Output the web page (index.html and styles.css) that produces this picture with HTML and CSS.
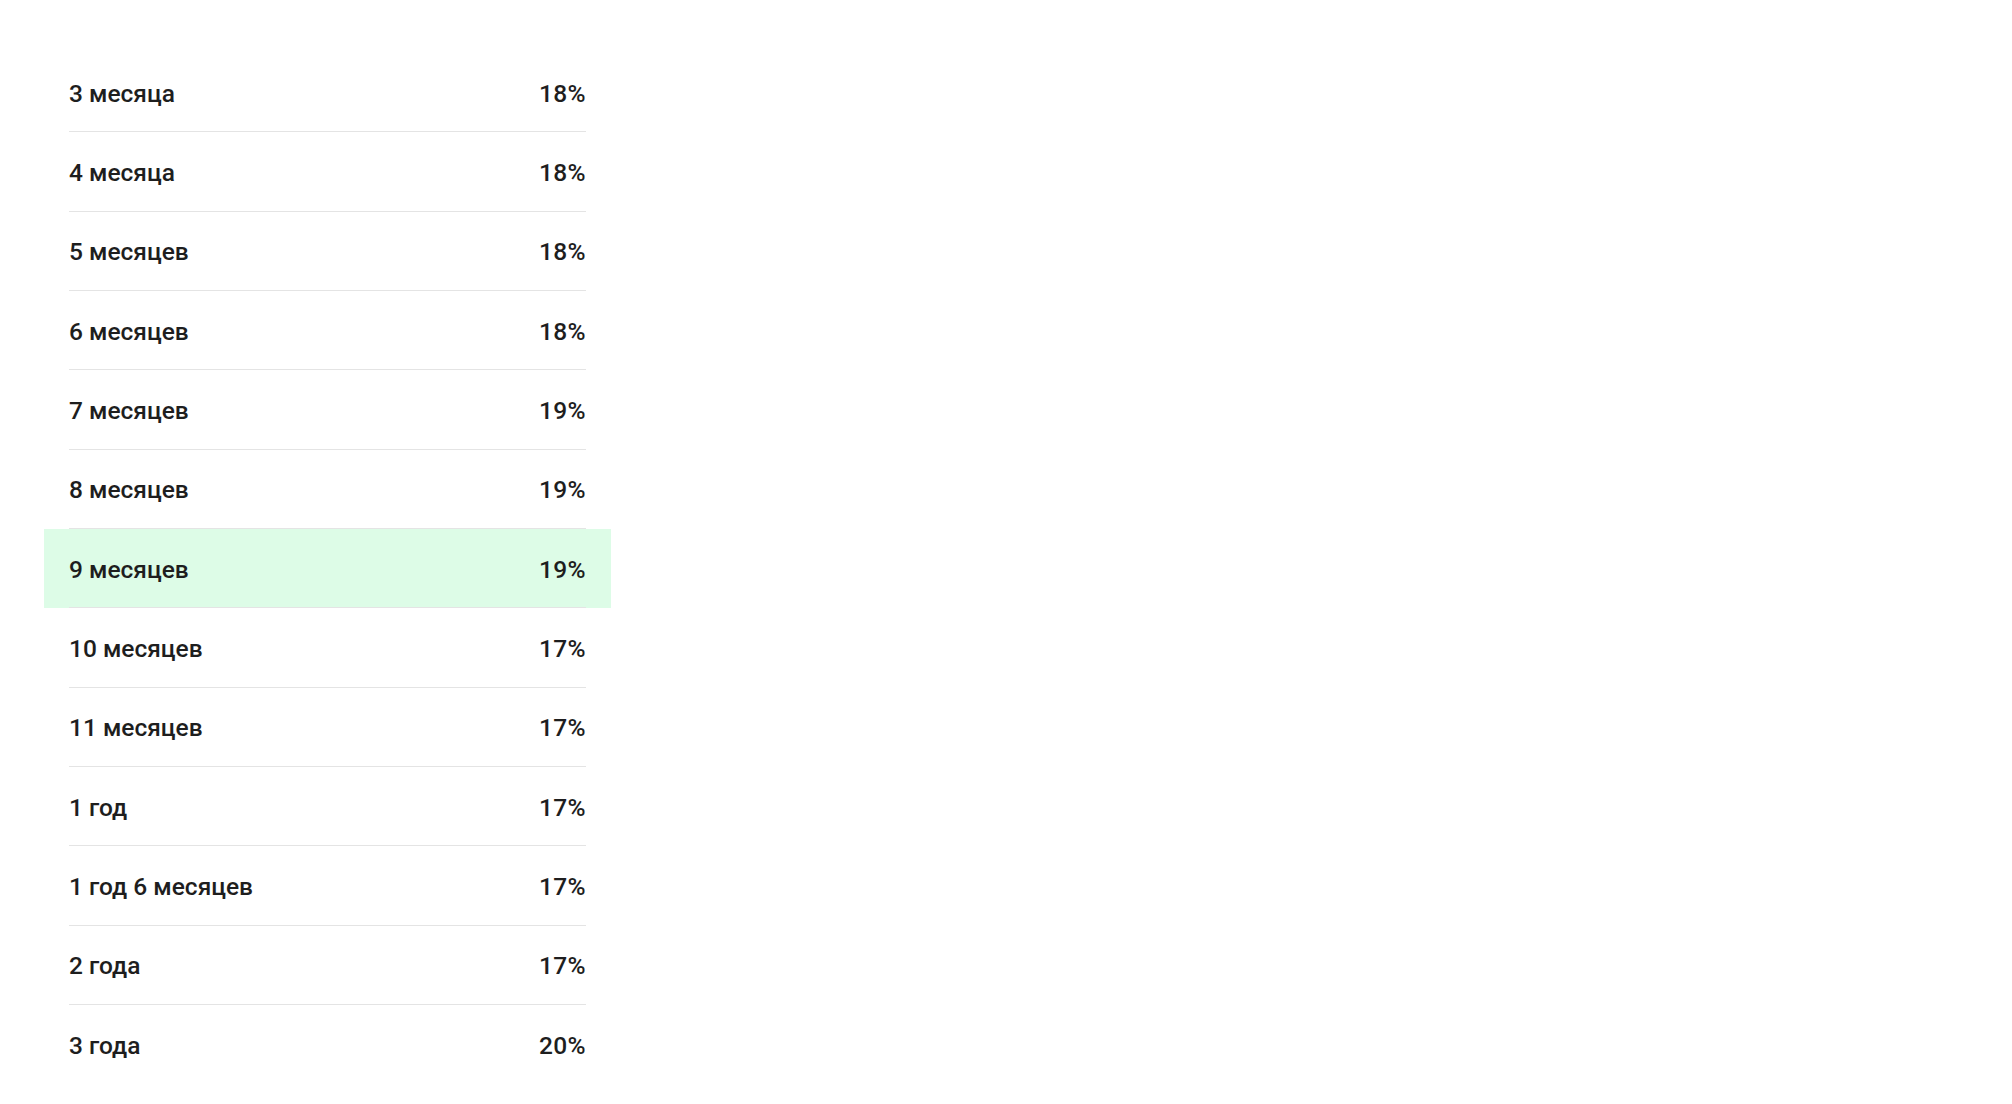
FILE: index.html
```html
<!DOCTYPE html>
<html lang="ru">
<head>
<meta charset="utf-8">
<title>Ставки</title>
<link rel="stylesheet" href="styles.css">
</head>
<body>
<ul class="rates">
  <li class="rate"><div class="rate-inner"><span class="term">3 месяца</span><span class="value">18%</span></div></li>
  <li class="rate"><div class="rate-inner"><span class="term">4 месяца</span><span class="value">18%</span></div></li>
  <li class="rate"><div class="rate-inner"><span class="term">5 месяцев</span><span class="value">18%</span></div></li>
  <li class="rate"><div class="rate-inner"><span class="term">6 месяцев</span><span class="value">18%</span></div></li>
  <li class="rate"><div class="rate-inner"><span class="term">7 месяцев</span><span class="value">19%</span></div></li>
  <li class="rate"><div class="rate-inner"><span class="term">8 месяцев</span><span class="value">19%</span></div></li>
  <li class="rate rate--active"><div class="rate-inner"><span class="term">9 месяцев</span><span class="value">19%</span></div></li>
  <li class="rate"><div class="rate-inner"><span class="term">10 месяцев</span><span class="value">17%</span></div></li>
  <li class="rate"><div class="rate-inner"><span class="term">11 месяцев</span><span class="value">17%</span></div></li>
  <li class="rate"><div class="rate-inner"><span class="term">1 год</span><span class="value">17%</span></div></li>
  <li class="rate"><div class="rate-inner"><span class="term">1 год 6 месяцев</span><span class="value">17%</span></div></li>
  <li class="rate"><div class="rate-inner"><span class="term">2 года</span><span class="value">17%</span></div></li>
  <li class="rate"><div class="rate-inner"><span class="term">3 года</span><span class="value">20%</span></div></li>
</ul>
</body>
</html>
```

FILE: styles.css
```css
html, body {
  margin: 0;
  padding: 0;
  background: #ffffff;
}

body {
  font-family: Roboto, "Liberation Sans", sans-serif;
  color: #1e1e1e;
  font-size: 24.5px;
  font-weight: 500;
}

.rates {
  list-style: none;
  margin: 53px 0 0 44px;
  padding: 0;
  width: 567px;
}

.rate {
  padding: 0 25px;
}

.rate-inner {
  box-sizing: border-box;
  height: 79.33px;
  padding-top: 2px;
  border-bottom: 1px solid #e4e4e4;
  display: flex;
  align-items: center;
  justify-content: space-between;
}

.rate:last-child .rate-inner {
  border-bottom: none;
}

.rate--active {
  background: #ddfce7;
}

.value {
  letter-spacing: 0.4px;
}
```
